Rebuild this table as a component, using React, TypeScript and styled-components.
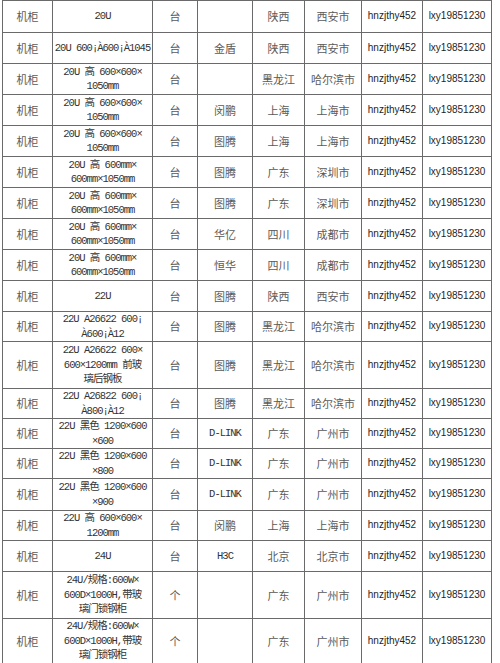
import React from 'react';
import styled, { createGlobalStyle } from 'styled-components';

const GlobalStyle = createGlobalStyle`
  html, body {
    margin: 0;
    padding: 0;
    background: #ffffff;
  }
`;

const COLUMNS = [50, 100, 45, 55, 52, 57, 61, 69];

interface IRow {
  spec: string[];
  unit: string;
  brand: string;
  province: string;
  city: string;
  height: number;
}

const SPEC_20U = ['20U 高 600×600×', '1050mm'];
const SPEC_20U_MM = ['20U 高 600mm×', '600mm×1050mm'];
const SPEC_24U = ['24U/规格:600W×', '600D×1000H,带玻', '璃门锁钢柜'];

const ROWS: IRow[] = [
  { spec: ['20U'], unit: '台', brand: '', province: '陕西', city: '西安市', height: 32 },
  { spec: ['20U 600¡À600¡À1045'], unit: '台', brand: '金盾', province: '陕西', city: '西安市', height: 31 },
  { spec: SPEC_20U, unit: '台', brand: '', province: '黑龙江', city: '哈尔滨市', height: 31 },
  { spec: SPEC_20U, unit: '台', brand: '闵鹏', province: '上海', city: '上海市', height: 31 },
  { spec: SPEC_20U, unit: '台', brand: '图腾', province: '上海', city: '上海市', height: 31 },
  { spec: SPEC_20U_MM, unit: '台', brand: '图腾', province: '广东', city: '深圳市', height: 31 },
  { spec: SPEC_20U_MM, unit: '台', brand: '图腾', province: '广东', city: '深圳市', height: 31 },
  { spec: SPEC_20U_MM, unit: '台', brand: '华亿', province: '四川', city: '成都市', height: 31 },
  { spec: SPEC_20U_MM, unit: '台', brand: '恒华', province: '四川', city: '成都市', height: 31 },
  { spec: ['22U'], unit: '台', brand: '图腾', province: '陕西', city: '西安市', height: 31 },
  { spec: ['22U A26622 600¡', 'À600¡À12'], unit: '台', brand: '图腾', province: '黑龙江', city: '哈尔滨市', height: 30 },
  {
    spec: ['22U A26622 600×', '600×1200mm 前玻', '璃后钢板'],
    unit: '台',
    brand: '图腾',
    province: '黑龙江',
    city: '哈尔滨市',
    height: 47,
  },
  { spec: ['22U A26822 600¡', 'À800¡À12'], unit: '台', brand: '图腾', province: '黑龙江', city: '哈尔滨市', height: 30 },
  { spec: ['22U 黑色 1200×600', '×600'], unit: '台', brand: 'D-LINK', province: '广东', city: '广州市', height: 30 },
  { spec: ['22U 黑色 1200×600', '×800'], unit: '台', brand: 'D-LINK', province: '广东', city: '广州市', height: 30 },
  { spec: ['22U 黑色 1200×600', '×900'], unit: '台', brand: 'D-LINK', province: '广东', city: '广州市', height: 32 },
  { spec: ['22U 高 600×600×', '1200mm'], unit: '台', brand: '闵鹏', province: '上海', city: '上海市', height: 30 },
  { spec: ['24U'], unit: '台', brand: 'H3C', province: '北京', city: '北京市', height: 31 },
  { spec: SPEC_24U, unit: '个', brand: '', province: '广东', city: '广州市', height: 47 },
  { spec: SPEC_24U, unit: '个', brand: '', province: '广东', city: '广州市', height: 45 },
];

const Page = styled.div`
  padding-left: 2px;
  width: 498px;
`;

const Table = styled.table`
  border-collapse: separate;
  border-spacing: 0;
  table-layout: fixed;
  width: 489px;
  border-top: 1px solid #6a6a6a;
  border-left: 1px solid #6a6a6a;
`;

const Row = styled.tr<{ $height: number }>`
  height: ${(p) => p.$height}px;
`;

type CellKind = 'cjk' | 'spec' | 'latin';

const Cell = styled.td<{ $kind: CellKind }>`
  box-sizing: border-box;
  padding: 0 1px;
  border-right: 1px solid #6a6a6a;
  border-bottom: 1px solid #6a6a6a;
  text-align: center;
  vertical-align: middle;
  white-space: nowrap;
  overflow: hidden;
  line-height: 14.5px;
  font-family: ${(p) =>
    p.$kind === 'latin'
      ? '"Liberation Sans", Arial, sans-serif'
      : p.$kind === 'spec'
        ? '"Liberation Mono", "Noto Sans CJK SC", monospace'
        : '"Noto Sans CJK SC", sans-serif'};
  font-size: ${(p) => (p.$kind === 'latin' ? '10px' : p.$kind === 'spec' ? '10.5px' : '11px')};
  letter-spacing: ${(p) => (p.$kind === 'spec' ? '-1px' : '0')};
  color: ${(p) => (p.$kind === 'latin' ? '#1e1e1e' : p.$kind === 'spec' ? '#333333' : '#5a5a5a')};
`;

const isLatin = (text: string): boolean => /^[\x00-\x7F]*$/.test(text) && text.length > 0;

const App: React.FC = () => (
  <Page>
    <GlobalStyle />
    <Table>
      <colgroup>
        {COLUMNS.map((w, i) => (
          <col key={i} style={{ width: w }} />
        ))}
      </colgroup>
      <tbody>
        {ROWS.map((row, i) => (
          <Row key={i} $height={row.height}>
            <Cell $kind="cjk">机柜</Cell>
            <Cell $kind="spec">
              {row.spec.map((line, j) => (
                <React.Fragment key={j}>
                  {j > 0 && <br />}
                  {line}
                </React.Fragment>
              ))}
            </Cell>
            <Cell $kind="cjk">{row.unit}</Cell>
            <Cell $kind={isLatin(row.brand) ? 'spec' : 'cjk'}>{row.brand}</Cell>
            <Cell $kind="cjk">{row.province}</Cell>
            <Cell $kind="cjk">{row.city}</Cell>
            <Cell $kind="latin">hnzjthy452</Cell>
            <Cell $kind="latin">lxy19851230</Cell>
          </Row>
        ))}
      </tbody>
    </Table>
  </Page>
);

export default App;
